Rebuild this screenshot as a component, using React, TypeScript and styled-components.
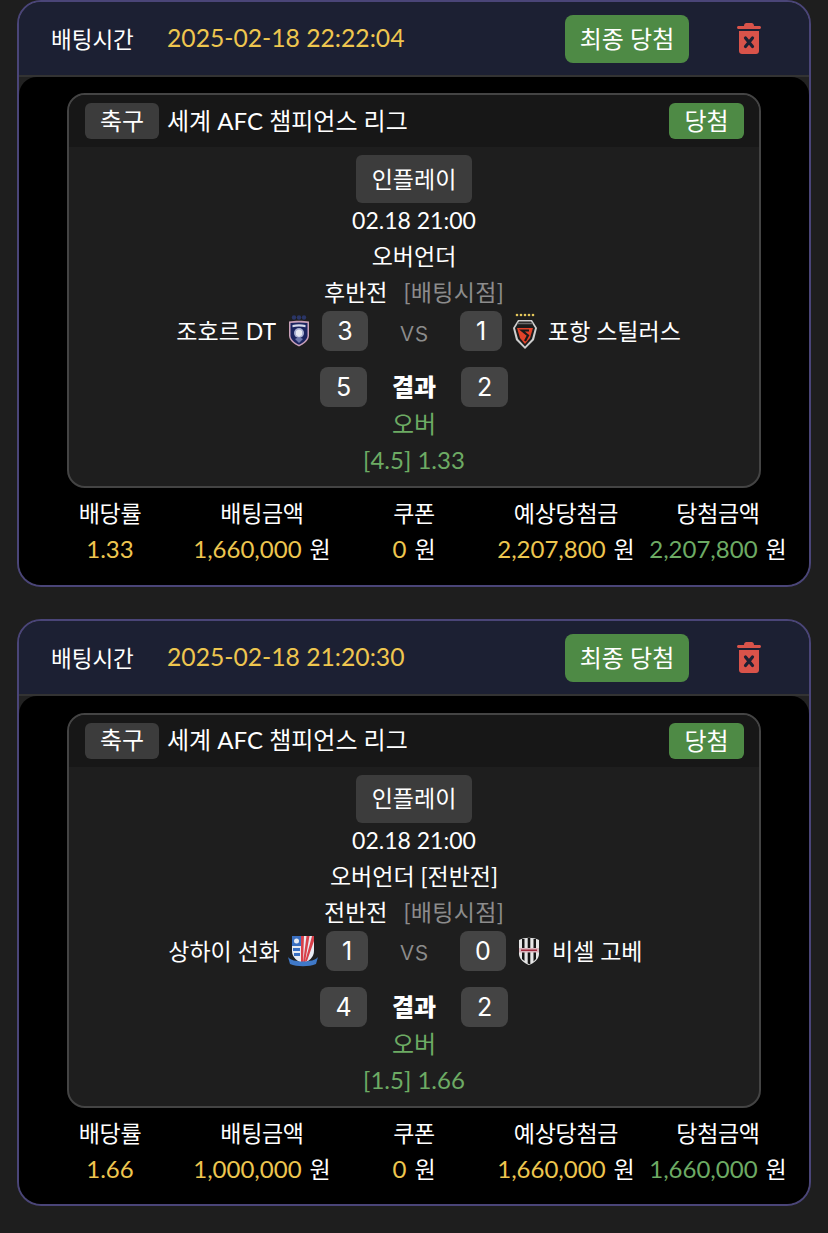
import { ReactNode } from 'react';
import styled, { createGlobalStyle } from 'styled-components';

const GlobalStyle = createGlobalStyle`
    html, body {
        margin: 0;
        padding: 0;
        background: #1e1e1e;
    }
    * {
        box-sizing: border-box;
    }
`;

const Page = styled.div`
    font-family: Lato, "Noto Sans CJK KR", sans-serif;
    color: #fff;
    display: flex;
    flex-direction: column;
    gap: 32.6px;
    padding: 0 17px 27px;
    width: 828px;
`;

const Card = styled.section`
    background: #222;
    border: 2px solid #4a4578;
    border-radius: 24px;
    overflow: hidden;
`;

const CardHeader = styled.header`
    align-items: center;
    background: #1c2033;
    border-bottom: 2px solid #333;
    display: flex;
    height: 75px;
    padding: 0 48px 0 32px;
`;

const HeaderLabel = styled.span`
    font-size: 22.5px;
    padding-bottom: 2px;
    width: 116px;
`;

const HeaderDate = styled.span`
    color: #eec64f;
    flex: 1;
    font-size: 24.7px;
    padding-bottom: 2px;
`;

const FinalButton = styled.button`
    background: #4e8a45;
    border: 0;
    border-radius: 8px;
    color: #fff;
    font-family: inherit;
    font-size: 24px;
    height: 48px;
    line-height: 46px;
    margin-right: 48px;
    padding: 0;
    width: 124px;
`;

const TrashButton = styled.svg`
    display: block;
    height: 31px;
    width: 24px;
`;

const CardBody = styled.div`
    background: #000;
    border-radius: 18px 18px 0 0;
    height: 507.6px;
    padding-top: 16.4px;
`;

const Panel = styled.div`
    background: #1e1e1e;
    border: 2px solid #444;
    border-radius: 18px;
    margin: 0 48px;
    overflow: hidden;
`;

const PanelHeader = styled.div`
    align-items: center;
    background: #171717;
    display: flex;
    height: 52px;
    padding: 0 15px 0 16px;
`;

const SportTag = styled.span`
    align-items: center;
    background: #3c3c3c;
    border-radius: 6px;
    display: flex;
    font-size: 24px;
    height: 36px;
    justify-content: center;
    margin-right: 8px;
    padding-bottom: 4px;
    width: 74px;
`;

const LeagueName = styled.span`
    flex: 1;
    font-size: 24px;
    padding-bottom: 4px;
`;

const WinTag = styled.span`
    align-items: center;
    background: #4e8a45;
    border-radius: 6px;
    display: flex;
    font-size: 24px;
    height: 36px;
    justify-content: center;
    padding-bottom: 3px;
    width: 75px;
`;

const PanelContent = styled.div`
    align-items: center;
    display: flex;
    flex-direction: column;
    padding: 8px 0 7px;
`;

const PlayBadge = styled.span`
    align-items: center;
    background: #3c3c3c;
    border-radius: 6px;
    display: flex;
    font-size: 23px;
    height: 48px;
    justify-content: center;
    padding-bottom: 3px;
    width: 116px;
`;

const InfoLine = styled.div<{ $green?: boolean }>`
    color: ${props => (props.$green ? '#6dab64' : '#fff')};
    font-size: ${props => (props.$green ? '24px' : '23px')};
    height: 36px;
    line-height: 34px;
    text-align: center;
`;

const Muted = styled.span`
    color: #8c8c8c;
    letter-spacing: 0.3px;
    margin-left: 16px;
`;

const TeamsRow = styled.div`
    align-items: center;
    display: grid;
    grid-template-columns: 1fr 92px 1fr;
    height: 40px;
    width: 100%;
`;

const TeamSide = styled.div<{ $away?: boolean }>`
    align-items: center;
    display: flex;
    flex-direction: ${props => (props.$away ? 'row' : 'row-reverse')};
    font-size: 23px;
`;

const TeamName = styled.span`
    padding-bottom: 2px;
`;

const LogoSlot = styled.span`
    align-items: center;
    display: flex;
    justify-content: center;
    width: 46px;
`;

const ScoreBox = styled.span<{ $narrow?: boolean }>`
    align-items: center;
    background: #444;
    border-radius: 8px;
    display: flex;
    font-family: Inter, sans-serif;
    font-size: 25px;
    height: 40px;
    justify-content: center;
    width: ${props => (props.$narrow ? '42px' : '46px')};
`;

const ResultBox = styled(ScoreBox)`
    width: 47px;
`;

const Versus = styled.span`
    color: #8c8c8c;
    font-family: Inter, sans-serif;
    font-size: 27px;
    font-weight: 300;
    text-align: center;
`;

const ResultRow = styled.div`
    align-items: center;
    display: grid;
    grid-template-columns: 47px 94px 47px;
    height: 40px;
    margin: 16px 0 0;
`;

const ResultLabel = styled.b`
    font-size: 24px;
    font-weight: 900;
    padding-bottom: 3px;
    text-align: center;
`;

const Stats = styled.div`
    display: grid;
    grid-template-columns: repeat(5, 152px);
    margin: 8px 0 0 15px;
`;

const Stat = styled.div`
    text-align: center;
    white-space: nowrap;
`;

const StatLabel = styled.div`
    font-size: 23px;
    height: 36px;
    letter-spacing: -0.3px;
    line-height: 34px;
`;

const StatValue = styled.div`
    display: flex;
    font-size: 23px;
    gap: 8px;
    height: 36px;
    justify-content: center;
    line-height: 34px;
`;

const Amount = styled.span<{ $green?: boolean }>`
    color: ${props => (props.$green ? '#6dab64' : '#eec64f')};
    font-size: 24px;
`;

const JohorLogo = () => (
    <svg width="22" height="32" viewBox="0 0 22 32">
        <g fill="#2a3566">
            <circle cx="6" cy="2.500" r="2.200" />
            <circle cx="11" cy="2.500" r="2.200" />
            <circle cx="16" cy="2.500" r="2.200" />
        </g>
        <path d="M1 6.500c6-1 14-1 20 0v14c0 5-5 8.500-10 11C6 29 1 25.500 1 20.500z" fill="#c9a0b8" />
        <path d="M2.500 8c5-.8 12-.8 17 0v12.500c0 4-4 7-8.500 9.300-4.500-2.300-8.500-5.300-8.500-9.300z" fill="#1c2560" />
        <path d="M4.500 10c4-1 9-1 13 0v2.300c-4-1-9-1-13 0z" fill="#d5d8ea" />
        <circle cx="11" cy="18" r="5" fill="#aab0d2" />
        <path d="M8 16c2-2 4-2 6 0v4l-3 2-3-2z" fill="#e6e8f2" />
        <path d="M7 24l4-2 4 2-4 4z" fill="#6f78ad" />
    </svg>
);

const PohangLogo = () => (
    <svg width="24" height="36" viewBox="0 0 24 36">
        <g fill="#e3c75a">
            <circle cx="4" cy="2" r="1.300" />
            <circle cx="8" cy="2" r="1.300" />
            <circle cx="12" cy="2" r="1.300" />
            <circle cx="16" cy="2" r="1.300" />
            <circle cx="20" cy="2" r="1.300" />
        </g>
        <path d="M0 15l5-8h14l5 8-3 12-9 9-9-9z" fill="#cfcfcf" />
        <path d="M2 15l4-6.500h12l4 6.500-3 11-7 7.500L5 26z" fill="#1b1b1b" />
        <path d="M4.500 10.500h15" stroke="#6a6a6a" strokeWidth="1.500" />
        <path d="M4 15h16l-3 10-5 6-5-6z" fill="#e2432a" />
        <path d="M16 17.500H9l6 5-3 5.500" fill="none" stroke="#1b1b1b" strokeWidth="2.200" />
    </svg>
);

const ShanghaiLogo = () => (
    <svg width="30" height="32" viewBox="0 0 30 32">
        <path d="M4 1h22v15c0 6-5 10-11 13C9 26 4 22 4 16z" fill="#e8ebf2" />
        <path d="M13 1h3l-1 27-2-1zM18.500 1h3L17 27l-2 1zM24 1h2v5l-7 20-2 1z" fill="#d8404a" />
        <path d="M4 1h9v10H4z" fill="#3a6fc0" />
        <path d="M5 13h7v3H5zM6 18h6v3H6z" fill="#3a6fc0" />
        <circle cx="8.500" cy="6" r="2.500" fill="#e8ebf2" />
        <path d="M0 22c4 6 26 6 30 0l-2 7c-7 3-19 3-26 0z" fill="#3f79c9" />
    </svg>
);

const VisselLogo = () => (
    <svg width="24" height="30" viewBox="0 0 24 30">
        <path d="M2 4c6-3 14-3 20 0v14c0 5-5 9-10 11C7 27 2 23 2 18z" fill="#e6e6e6" />
        <path d="M5 3h2.500v22L5 23zM10.700 2h2.600v26.500l-2.600-1zM16.500 3H19v20l-2.500 2.500z" fill="#151515" />
        <rect x="2" y="12" width="20" height="4.500" fill="#d9b3bb" />
        <rect x="4" y="13.500" width="16" height="1.500" fill="#a0283c" />
    </svg>
);

const TrashIcon = () => (
    <TrashButton viewBox="0 0 24 31">
        <path d="M7 3c0-2 1-3 2.500-3h5C16 0 17 1 17 3h5.500c.8 0 1.500.7 1.500 1.500S23.300 6 22.500 6h-21C.7 6 0 5.300 0 4.500S.7 3 1.500 3z" fill="#d9534a" />
        <path d="M2 8h20v20c0 1.700-1.300 3-3 3H5c-1.700 0-3-1.300-3-3z" fill="#d9534a" />
        <path d="M8.500 15l7 8.500M15.500 15l-7 8.500" stroke="#1c2033" strokeWidth="3.200" strokeLinecap="round" />
    </TrashButton>
);

type Bet = {
    date: string;
    market: string;
    period: string;
    home: string;
    homeLogo: ReactNode;
    homeScore: number;
    away: string;
    awayLogo: ReactNode;
    awayScore: number;
    finalHome: number;
    finalAway: number;
    line: string;
    odds: string;
    stake: string;
    payout: string;
};

const bets: Bet[] = [
    {
        date: '2025-02-18 22:22:04',
        market: '오버언더',
        period: '후반전',
        home: '조호르 DT',
        homeLogo: <JohorLogo />,
        homeScore: 3,
        away: '포항 스틸러스',
        awayLogo: <PohangLogo />,
        awayScore: 1,
        finalHome: 5,
        finalAway: 2,
        line: '[4.5] 1.33',
        odds: '1.33',
        stake: '1,660,000',
        payout: '2,207,800',
    },
    {
        date: '2025-02-18 21:20:30',
        market: '오버언더 [전반전]',
        period: '전반전',
        home: '상하이 선화',
        homeLogo: <ShanghaiLogo />,
        homeScore: 1,
        away: '비셀 고베',
        awayLogo: <VisselLogo />,
        awayScore: 0,
        finalHome: 4,
        finalAway: 2,
        line: '[1.5] 1.66',
        odds: '1.66',
        stake: '1,000,000',
        payout: '1,660,000',
    },
];

function BetCard({ bet }: { bet: Bet }) {
    return (
        <Card>
            <CardHeader>
                <HeaderLabel>배팅시간</HeaderLabel>
                <HeaderDate>{bet.date}</HeaderDate>
                <FinalButton>최종 당첨</FinalButton>
                <TrashIcon />
            </CardHeader>
            <CardBody>
                <Panel>
                    <PanelHeader>
                        <SportTag>축구</SportTag>
                        <LeagueName>세계 AFC 챔피언스 리그</LeagueName>
                        <WinTag>당첨</WinTag>
                    </PanelHeader>
                    <PanelContent>
                        <PlayBadge>인플레이</PlayBadge>
                        <InfoLine>02.18 21:00</InfoLine>
                        <InfoLine>{bet.market}</InfoLine>
                        <InfoLine>
                            {bet.period}
                            <Muted>[배팅시점]</Muted>
                        </InfoLine>
                        <TeamsRow>
                            <TeamSide>
                                <ScoreBox $narrow={bet.homeScore === 1}>{bet.homeScore}</ScoreBox>
                                <LogoSlot>{bet.homeLogo}</LogoSlot>
                                <TeamName>{bet.home}</TeamName>
                            </TeamSide>
                            <Versus>vs</Versus>
                            <TeamSide $away>
                                <ScoreBox $narrow={bet.awayScore === 1}>{bet.awayScore}</ScoreBox>
                                <LogoSlot>{bet.awayLogo}</LogoSlot>
                                <TeamName>{bet.away}</TeamName>
                            </TeamSide>
                        </TeamsRow>
                        <ResultRow>
                            <ResultBox>{bet.finalHome}</ResultBox>
                            <ResultLabel>결과</ResultLabel>
                            <ResultBox>{bet.finalAway}</ResultBox>
                        </ResultRow>
                        <InfoLine $green>오버</InfoLine>
                        <InfoLine $green>{bet.line}</InfoLine>
                    </PanelContent>
                </Panel>
                <Stats>
                    <Stat>
                        <StatLabel>배당률</StatLabel>
                        <StatValue>
                            <Amount>{bet.odds}</Amount>
                        </StatValue>
                    </Stat>
                    <Stat>
                        <StatLabel>배팅금액</StatLabel>
                        <StatValue>
                            <Amount>{bet.stake}</Amount> 원
                        </StatValue>
                    </Stat>
                    <Stat>
                        <StatLabel>쿠폰</StatLabel>
                        <StatValue>
                            <Amount>0</Amount> 원
                        </StatValue>
                    </Stat>
                    <Stat>
                        <StatLabel>예상당첨금</StatLabel>
                        <StatValue>
                            <Amount>{bet.payout}</Amount> 원
                        </StatValue>
                    </Stat>
                    <Stat>
                        <StatLabel>당첨금액</StatLabel>
                        <StatValue>
                            <Amount $green>{bet.payout}</Amount> 원
                        </StatValue>
                    </Stat>
                </Stats>
            </CardBody>
        </Card>
    );
}

export default function App() {
    return (
        <Page>
            <GlobalStyle />
            {bets.map(bet => (
                <BetCard key={bet.date} bet={bet} />
            ))}
        </Page>
    );
}
